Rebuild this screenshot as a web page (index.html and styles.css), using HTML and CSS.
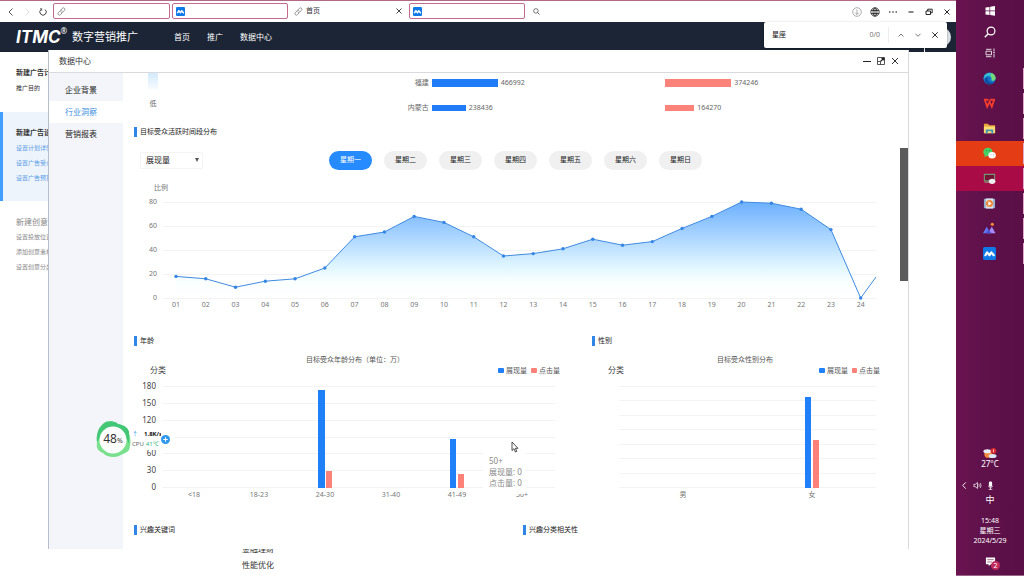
FILE: index.html
```html
<!DOCTYPE html>
<html lang="zh-CN">
<head>
<meta charset="utf-8">
<title>数字营销推广</title>
<link rel="stylesheet" href="styles.css">
</head>
<body>
<svg class="defs" aria-hidden="true">
  <symbol id="i-link" viewBox="0 0 8 8"><g fill="none" stroke="#888" stroke-width=".8" stroke-linecap="round"><path d="M3.4 2.6 4.8 1.2a1.2 1.2 0 0 1 1.9 1.7L5 4.6a1.1 1.1 0 0 1-1.6 0"/><path d="M4.4 5.4 3.1 6.8a1.2 1.2 0 0 1-1.9-1.7l1.7-1.7a1.1 1.1 0 0 1 1.6 0"/></g></symbol>
  <symbol id="i-close" viewBox="0 0 8 8"><path d="M1.5 1.5l5 5m0-5l-5 5" fill="none" stroke="currentColor" stroke-width=".9"/></symbol>
  <symbol id="i-site" viewBox="0 0 12 12"><rect width="12" height="12" rx="1.5" fill="#0f79e8"/><path d="M2.2 7.600l1.600-2.600 2.200 2.600 1.700-2.600 2.200 2.600" fill="none" stroke="#fff" stroke-width="2" stroke-linejoin="round" stroke-linecap="round"/></symbol>
  <symbol id="i-search" viewBox="0 0 12 12"><circle cx="7" cy="5" r="3.9" fill="none" stroke="currentColor" stroke-width="1.2"/><path d="M4.2 7.8L.8 11.2" stroke="currentColor" stroke-width="1.4"/></symbol>
</svg>

<div class="desktop">
  <div class="browser">
    <div class="toolbar">
      <button class="tool" aria-label="后退"><svg viewBox="0 0 10 10"><path d="M6.5 1.5L3 5l3.5 3.5" fill="none" stroke="#555"/></svg></button>
      <button class="tool" aria-label="前进"><svg viewBox="0 0 10 10"><path d="M3.5 1.5L7 5 3.5 8.5" fill="none" stroke="#ddd"/></svg></button>
      <button class="tool" aria-label="刷新"><svg viewBox="0 0 10 10"><path d="M3 2.5A3.2 3.2 0 1 0 7.2 2.6M2.2 1.8h1.5v1.7" fill="none" stroke="#333" stroke-width=".9"/></svg></button>
      <div class="tabs">
        <button class="tab boxed" aria-label="标签页 1"><svg class="fav"><use href="#i-link"/></svg></button>
        <button class="tab boxed" aria-label="标签页 2"><svg class="fav"><use href="#i-site"/></svg></button>
        <button class="tab"><svg class="fav"><use href="#i-link"/></svg><span>首页</span><svg class="tab-close"><use href="#i-close"/></svg></button>
        <button class="tab boxed" aria-label="标签页 4"><svg class="fav"><use href="#i-site"/></svg></button>
      </div>
      <button class="tool" aria-label="搜索"><svg class="flip small" viewBox="0 0 12 12"><use href="#i-search"/></svg></button>
      <div class="window-tools">
        <button class="tool" aria-label="下载"><svg viewBox="0 0 10 10" fill="none" stroke="#888" stroke-width=".7"><circle cx="5" cy="5" r="4.3"/><path d="M5 2.5v5M3.2 5.7L5 7.5l1.800-1.800"/></svg></button>
        <button class="tool" aria-label="语言"><svg viewBox="0 0 10 10" fill="none" stroke="#222" stroke-width=".8"><circle cx="5" cy="5" r="4.2"/><ellipse cx="5" cy="5" rx="2" ry="4.2"/><path d="M1 3.5h8M1 6.5h8M5 1v8"/></svg></button>
        <button class="tool" aria-label="更多"><svg viewBox="0 0 10 10" fill="#222"><circle cx="1.8" cy="5" r=".8"/><circle cx="5" cy="5" r=".8"/><circle cx="8.2" cy="5" r=".8"/></svg></button>
        <button class="tool" aria-label="最小化"><svg viewBox="0 0 10 10"><path d="M2.5 5h5" stroke="#111"/></svg></button>
        <button class="tool" aria-label="还原"><svg viewBox="0 0 10 10" fill="none" stroke="#111" stroke-width=".9"><path d="M2 4h4.500v3.500H2zM3.700 4V2.200h4.500v3.600H6.500"/></svg></button>
        <button class="tool" aria-label="关闭窗口"><svg viewBox="0 0 10 10"><path d="M2.5 2.5l5 5m0-5l-5 5" stroke="#111" stroke-width=".9"/></svg></button>
      </div>
    </div>

    <header class="site-header">
      <div class="logo"><span class="logo-mark">ITMC</span><sup>®</sup></div>
      <span class="logo-name">数字营销推广</span>
      <nav class="site-nav"><a href="#">首页</a><a href="#">推广</a><a href="#">数据中心</a></nav>
      <span class="header-line"></span>
      <span class="avatar"></span>
    </header>

    <div class="page">
      <aside class="steps">
        <section class="step"><h3>新建广告计划</h3><a href="#">推广目的</a></section>
        <section class="step current"><h3>新建广告设置</h3><a href="#">设置计划详情</a><a href="#">设置广告受众</a><a href="#">设置广告预算</a></section>
        <section class="step pending"><h3>新建创意</h3><a href="#">设置投放位置</a><a href="#">添加创意素材</a><a href="#">设置创意分类</a></section>
      </aside>
      <div class="keywords"><span>金融理财</span><span>性能优化</span></div>
    </div>

    <form class="find">
      <input type="text" aria-label="查找" value="星座">
      <span class="find-count">0/0</span>
      <span class="find-actions">
        <button type="button" class="tool" aria-label="上一个"><svg viewBox="0 0 10 10"><path d="M2.5 6.5L5 4l2.500 2.500" fill="none" stroke="#555" stroke-width=".8"/></svg></button>
        <button type="button" class="tool" aria-label="下一个"><svg viewBox="0 0 10 10"><path d="M2.5 3.8L5 6.300l2.500-2.500" fill="none" stroke="#555" stroke-width=".8"/></svg></button>
        <button type="button" class="tool" aria-label="关闭查找"><svg viewBox="0 0 10 10"><path d="M2.3 2.3l5.400 5.400m0-5.400L2.300 7.700" stroke="#333"/></svg></button>
      </span>
    </form>

    <div class="dialog" role="dialog" aria-labelledby="dialog-title">
      <div class="dialog-head">
        <h2 id="dialog-title">数据中心</h2>
        <button class="tool" aria-label="最小化面板"><svg viewBox="0 0 10 10"><path d="M1 5.5h8" stroke="#222"/></svg></button>
        <button class="tool" aria-label="最大化面板"><svg viewBox="0 0 10 10" fill="none" stroke="#444" stroke-width=".9"><path d="M1.500 1.500h7v7h-7zM1.500 5.500h3v3"/><path d="M4.500 5.500l3.500-3.500M5.500 2.300h2.300V4.500" stroke="#222" stroke-width="1.200"/></svg></button>
        <button class="tool" aria-label="关闭面板"><svg viewBox="0 0 10 10"><path d="M2 2l6 6m0-6L2 8" stroke="#333"/></svg></button>
      </div>
      <div class="dialog-body">
        <nav class="side-nav">
          <a href="#">企业背景</a>
          <a href="#" class="active">行业洞察</a>
          <a href="#">营销报表</a>
        </nav>
        <main class="report">
          <div class="regions">
            <div class="heat"><span class="heat-bar"></span><span>低</span></div>
            <div class="hbars">
              <div class="hbar"><span class="hbar-name">福建</span><span class="bar tall" style="width:66px"></span><span>466992</span></div>
              <div class="hbar"><span class="hbar-name">内蒙古</span><span class="bar" style="width:34px"></span><span>238436</span></div>
            </div>
            <div class="hbars red">
              <div class="hbar"><span class="bar tall" style="width:66px"></span><span>374246</span></div>
              <div class="hbar"><span class="bar" style="width:29px"></span><span>164270</span></div>
            </div>
          </div>

          <h3 class="title">目标受众活跃时间段分布</h3>
          <div class="filters">
            <label class="picker"><select aria-label="指标"><option>展现量</option><option>点击量</option></select><span class="caret"></span></label>
            <div class="days">
              <button class="on">星期一</button><button>星期二</button><button>星期三</button><button>星期四</button><button>星期五</button><button>星期六</button><button>星期日</button>
            </div>
          </div>

          <svg class="chart hours" viewBox="134 180 755 132" role="img" aria-label="活跃时间段">
            <defs><linearGradient id="fade" gradientUnits="userSpaceOnUse" x1="0" y1="202" x2="0" y2="298"><stop offset="0" stop-color="#6cb0fe"/><stop offset=".4" stop-color="#b2d9ff"/><stop offset=".65" stop-color="#dcf4ff"/><stop offset=".83" stop-color="#faffff"/><stop offset="1" stop-color="#fff"/></linearGradient></defs>
            <g class="grid" id="hour-grid"></g>
            <g id="hour-plot"></g>
            <text class="end" x="168" y="190">比例</text>
          </svg>

          <div class="pair audience">
            <section>
              <h3 class="title">年龄</h3>
              <svg class="chart" viewBox="134 350 458 150" role="img" aria-label="年龄分布">
                <g class="grid" id="age-grid"></g>
                <text class="mid dark" x="355" y="362">目标受众年龄分布（单位：万）</text>
                <text class="mid big" x="158" y="373">分类</text>
                <rect class="blue" x="498" y="368" width="6" height="5" rx="1"/><text class="dark" x="506" y="373">展现量</text>
                <rect class="coral" x="531" y="368" width="6" height="5" rx="1"/><text class="dark" x="539" y="373">点击量</text>
                <rect class="blue" x="318" y="390" width="7" height="98"/><rect class="coral" x="326" y="471" width="6" height="17"/>
                <rect class="blue" x="450" y="439" width="6" height="49"/><rect class="coral" x="458" y="474" width="6" height="14"/>
                <g class="mid-group"><text x="194" y="497">&lt;18</text><text x="259" y="497">18-23</text><text x="325" y="497">24-30</text><text x="391" y="497">31-40</text><text x="457" y="497">41-49</text><text x="522" y="497">50+</text></g>
              </svg>
              <div class="tooltip"><span>50+</span><span>展现量: 0</span><span>点击量: 0</span></div>
            </section>
            <section>
              <h3 class="title">性别</h3>
              <svg class="chart" viewBox="592 350 297 150" role="img" aria-label="性别分布">
                <g class="grid" id="sex-grid"></g>
                <text class="mid dark" x="745" y="362">目标受众性别分布</text>
                <text class="mid big" x="616" y="373">分类</text>
                <rect class="blue" x="819" y="368" width="6" height="5" rx="1"/><text class="dark" x="827" y="373">展现量</text>
                <rect class="coral" x="852" y="368" width="5" height="5" rx="1"/><text class="dark" x="859" y="373">点击量</text>
                <rect class="blue" x="805" y="397" width="6" height="91"/><rect class="coral" x="813" y="440" width="6" height="48"/>
                <g class="mid-group"><text x="683" y="497">男</text><text x="812" y="497">女</text></g>
              </svg>
            </section>
          </div>

          <div class="pair interests">
            <h3 class="title">兴趣关键词</h3>
            <h3 class="title">兴趣分类相关性</h3>
          </div>
        </main>
        <div class="scroll"><span></span></div>
      </div>
    </div>

    <div class="monitor">
      <div class="gauge">
        <svg viewBox="0 0 36 38"><path d="M8 4C12 0 20 1 23 4c6 1 11 4 11 9 2 5 2 12 0 17-2 3-7 4-10 6-5 2-13 1-16-3-5-2-7-5-6-10-1-7 1-14 6-19z" fill="#7be08d"/><path d="M8 4C12 0 20 1 23 4c6 1 11 4 11 9v11C29 8 12 4 2 22 1 15 3 8 8 4z" fill="#43c777"/><circle cx="18" cy="20" r="13.500" fill="#fff"/></svg>
        <span><b>48</b>%</span>
      </div>
      <div class="stats"><span><i>↑</i><strong>1.8K/s</strong></span><span>CPU <em>41℃</em></span></div>
      <button class="plus" aria-label="加速"><svg viewBox="0 0 10 10"><circle cx="5" cy="5" r="5" fill="#2d97ee"/><path d="M5 2.500v5M2.500 5h5" stroke="#fff" stroke-width="1.200"/></svg></button>
    </div>
    <svg class="pointer" viewBox="0 0 8 12"><path d="M1 1v8.500l2-1.800L4.500 11l1.300-.6L4.400 7.300H7z" fill="#fff" stroke="#222" stroke-width=".8"/></svg>
  </div>

  <aside class="taskbar">
    <div class="launch">
      <button aria-label="开始"><svg viewBox="0 0 12 12" fill="#fff"><path d="M1.500 2.500l4-.6v3.700h-4zM6.200 1.800l4.800-.7v4.500H6.200zM1.500 6.300h4V10l-4-.6zM6.200 6.300H11v4.500l-4.800-.7z"/></svg></button>
      <button aria-label="搜索"><svg class="white" viewBox="0 0 12 12"><use href="#i-search"/></svg></button>
      <button aria-label="任务视图"><svg viewBox="0 0 12 12" fill="none" stroke="#eee" stroke-width=".9"><path d="M2 4.200h5.500v3.600H2zM2 2.300h5.500M2 9.700h5.500M10 1.500v3M10 7v3.500M9 5.700h2"/></svg></button>
    </div>
    <div class="apps">
      <button class="run" aria-label="Edge"><svg viewBox="0 0 14 14"><circle cx="7" cy="7" r="6.500" fill="#1473c8"/><path d="M1 5C3-.8 12-.8 13.500 6c.3 3-2 4-4.500 3 1-3-1.500-5-4-4.500C3 4.500 1.500 6 .6 8z" fill="#37bdd0"/><path d="M9 1c3 1 4.500 3 4.500 5.500 0 2.500-2.500 3.500-4.500 2.500 1.200-2 0-4-1-4.500z" fill="#75d875"/><path d="M5.500 6C4 9 7 12.500 11.500 11.500 9 14.500 3 14 2 9c0-2 1.800-3.500 3.500-3z" fill="#0e4d9e"/></svg></button>
      <button class="run" aria-label="WPS"><svg viewBox="0 0 14 14"><path d="M1 3h5M2 3l2.500 7.500L7 5l2.500 5.500L12 3M7.500 3H13" fill="none" stroke="#f03b2d" stroke-width="2"/></svg></button>
      <button class="run" aria-label="文件资源管理器"><svg viewBox="0 0 14 14"><path d="M1 2h4.500l1 1.500H13V12H1z" fill="#e8a93c"/><path d="M1 5h12v7H1z" fill="#ffdc73"/><path d="M3 8h8v4.500H9V10H5v2.500H3z" fill="#3d97b8"/></svg></button>
      <button class="run orange" aria-label="微信"><svg viewBox="0 0 14 14"><ellipse cx="5.300" cy="5.300" rx="5" ry="4.500" fill="#45d164"/><path d="M2 8l-.5 3 3-1.500z" fill="#45d164"/><ellipse cx="9.800" cy="9" rx="4" ry="3.500" fill="#fff"/><path d="M3.500 4h.8m2 0h.8" stroke="#166" stroke-width="1"/><path d="M8.300 8.500h.7m2 0h.7" stroke="#777" stroke-width=".8"/></svg></button>
      <button class="run crimson" aria-label="投屏"><svg viewBox="0 0 14 14"><path d="M1.500 2.500h11v7h-11z" fill="#751536" stroke="#729574" stroke-width="1.200"/><path d="M1.500 11h6" stroke="#8aa789"/><ellipse cx="9.800" cy="10" rx="3.500" ry="2.800" fill="#eee"/></svg></button>
      <button class="run" aria-label="播放器"><svg viewBox="0 0 14 14"><path d="M1 2h12v10H1z" fill="#91abc9"/><path d="M3 1.500h8v11H3z" fill="#d7e4ef"/><circle cx="7" cy="7" r="3.800" fill="#ef873c"/><path d="M5.800 4.700L9.300 7 5.800 9.300z" fill="#fff"/></svg></button>
      <button class="run" aria-label="图库"><svg viewBox="0 0 14 14"><path d="M0 12l4-7 4 7z" fill="#6277f2"/><path d="M5 12l4.500-7 4 7z" fill="#a78aff"/><path d="M3 12l3-4 3 4z" fill="#4750d3"/><circle cx="10" cy="2.500" r="1.700" fill="#f58b3f"/></svg></button>
      <button class="run" aria-label="营销客户端"><svg viewBox="0 0 12 12"><use href="#i-site"/></svg></button>
    </div>
    <div class="tray">
      <svg class="weather" viewBox="0 0 16 12"><circle cx="6" cy="7" r="4.500" fill="#f3893b"/><ellipse cx="5" cy="4" rx="4.500" ry="2.300" fill="#e7effb"/><ellipse cx="11" cy="9.500" rx="4.500" ry="2.300" fill="#dce9fa"/><circle cx="12" cy="3.500" r="3.300" fill="#d6292b"/><path d="M12 1.800v3.400" stroke="#fff" stroke-width=".8"/></svg>
      <span class="temp">27°C</span>
      <div class="tray-icons">
        <svg viewBox="0 0 10 10"><path d="M6.500 1.500L3 5l3.500 3.500" fill="none" stroke="#fff"/></svg>
        <svg viewBox="0 0 10 10" fill="none" stroke="#fff" stroke-width=".8"><path d="M1 3.700h1.500L5 1.700v6.600L2.500 6.300H1zM6.500 3.500q1 1.500 0 3M8 2.300q2 2.700 0 5.400"/></svg>
        <svg viewBox="0 0 10 10"><rect x="3.200" y=".5" width="3.600" height="6" rx="1.500" fill="#fff"/><path d="M2.500 5.500q2.500 4 5 0M5 7v2.500M3 9.300h4" fill="none" stroke="#fff" stroke-width=".8"/></svg>
      </div>
      <span class="ime">中</span>
      <div class="clock"><span>15:48</span><span>星期三</span><span>2024/5/29</span></div>
      <button class="notes" aria-label="通知"><svg viewBox="0 0 12 12"><path d="M1 1.500h10v7.500H6.500L4 11V9H1z" fill="#fff"/><path d="M2.500 4h7M2.500 6.500h5" stroke="#8b3c69" stroke-width=".8"/></svg><span>2</span></button>
    </div>
  </aside>
</div>
<script src="charts.js"></script>
</body>
</html>
```

FILE: styles.css
```css
* { box-sizing: border-box; }
body { margin: 0; font: 7px/10px "Noto Sans", "Noto Sans CJK SC", sans-serif; color: #333; background: #fff; }
button { margin: 0; padding: 0; border: 0; background: none; font: inherit; color: inherit; }
a { color: inherit; text-decoration: none; }
h2, h3 { margin: 0; font: inherit; }
svg { display: block; }
.defs { position: absolute; width: 0; height: 0; }

.desktop { display: grid; grid-template-columns: 1fr 68px; height: 100vh; overflow: hidden; }
.browser { position: relative; display: flex; flex-direction: column; min-width: 0; overflow: hidden; }

.toolbar { display: flex; align-items: center; height: 22px; flex: none; border-top: 1px solid #b06a88; padding: 0 1px 0 3px; }
.tool { display: grid; place-items: center; width: 16px; height: 16px; flex: none; }
.tool svg { width: 10px; height: 10px; }
.tool .small { width: 7px; height: 7px; color: #444; }
.flip { transform: scaleX(-1); }
.tabs { display: flex; gap: 2px; flex: 0 1 472px; min-width: 0; margin: 0 3px 1px 2px; }
.tab { display: flex; align-items: center; gap: 3px; flex: 1; min-width: 0; height: 16px; padding: 0 3px; border: 1px solid transparent; border-radius: 2px; }
.tab.boxed { border-color: #c36b8f; }
.fav { width: 9px; height: 9px; }
.tab-close { width: 8px; height: 8px; margin-left: auto; }
.window-tools { display: flex; gap: 2px; margin-left: auto; }

.site-header { display: flex; align-items: center; height: 30px; flex: none; padding: 0 5px 0 16px; background: #1b2535; color: #fff; }
.logo { display: flex; width: 56px; }
.logo-mark { font: italic 700 17px/20px Inter, sans-serif; }
.logo sup { font-size: 8px; line-height: 8px; vertical-align: top; }
.logo-name { font-size: 11px; line-height: 16px; }
.site-nav { display: flex; gap: 17px; flex: 1; margin-left: 36px; font-size: 8px; }
.header-line { width: 1px; align-self: stretch; background: #fff; }
.avatar { width: 20px; height: 20px; margin-left: 6px; border-radius: 50%; background: #dfe5ea; }

.page { display: grid; grid-template-columns: 160px 1fr; flex: 1; min-height: 0; }
.steps { display: flex; flex-direction: column; }
.step { display: flex; flex-direction: column; gap: 5px; padding: 16px 16px 16px 13px; border-left: 3px solid transparent; white-space: nowrap; font-size: 6px; }
.step h3 { font-size: 7px; font-weight: 700; }
.step:first-child { padding-bottom: 19px; }
.step.current { border-color: #409eff; background: #edf4fc; color: #5b9ce6; padding-bottom: 18px; }
.step.current h3 { color: #333; }
.step.pending { color: #888; }
.step.pending h3 { font-size: 8px; font-weight: 400; }
.keywords { display: flex; flex-direction: column; align-self: end; gap: 6px; padding: 0 82px 6px; font-size: 8px; }

.find { position: absolute; top: 22px; right: 9px; display: flex; align-items: center; width: 183px; height: 26px; padding-left: 8px; background: #fff; border-radius: 2px; box-shadow: 0 1px 3px #0005; }
.find input { flex: 1; min-width: 0; padding: 0; border: 0; outline: 0; font: inherit; color: #111; }
.find-count { color: #777; margin-right: 8px; }
.find-actions { display: flex; gap: 1px; border-left: 1px solid #eee; padding: 0 4px; }

.dialog { position: absolute; top: 50px; right: 47px; bottom: 27px; left: 48px; display: flex; flex-direction: column; background: #fff; border: 1px solid #d9dadd; border-width: 0 1px 0 1px; border-left-color: #b7bdc9; }
.dialog-head { display: flex; align-items: center; flex: none; height: 23px; padding: 0 6px 0 10px; border-bottom: 1px solid #d9d9de; }
.dialog-head h2 { flex: 1; font-size: 8px; }
.dialog-head .tool { width: 14px; }
.dialog-body { display: grid; grid-template-columns: 74px 1fr 8px; flex: 1; min-height: 0; }
.side-nav { display: flex; flex-direction: column; padding-top: 6px; background: #f4f5fa; font-size: 8px; color: #222; }
.side-nav a { padding: 6px 16px; white-space: nowrap; }
.side-nav .active { background: #fff; color: #3f8fe0; }
.report { min-width: 0; overflow: hidden; padding: 0 11px; }
.scroll { padding-top: 75px; }
.scroll span { display: block; height: 133px; background: #5b5b5b; }

.regions { display: grid; grid-template-columns: 259fr 273fr 224fr; height: 53px; color: #666; }
.heat { display: flex; flex-direction: column; align-items: center; width: 10px; margin-left: 14px; gap: 10px; }
.heat-bar { width: 10px; height: 16px; background: linear-gradient(#d3eafc, #f6fbff); }
.hbars { display: flex; flex-direction: column; gap: 15px; padding-top: 5px; }
.hbar { display: flex; align-items: center; gap: 3px; height: 10px; }
.hbar-name { width: 36px; text-align: right; }
.bar { height: 6px; background: #1f7bf6; }
.bar.tall { height: 8px; }
.red .bar { background: #fb8379; }

.title { display: flex; align-items: center; gap: 3px; height: 12px; color: #222; font-size: 7px; }
.title::before { content: ""; width: 3px; height: 10px; background: #2f86e6; }
.filters { display: flex; align-items: center; height: 20px; margin: 12px 0 10px; padding-left: 6px; }
.picker { position: relative; width: 63px; }
.picker select { appearance: none; width: 100%; height: 17px; padding: 0 5px; border: 1px solid #f4f4f4; border-radius: 2px; background: #fff; font: inherit; font-size: 8px; color: #222; }
.caret { position: absolute; top: 6px; right: 4px; border: 2px solid transparent; border-top: 4px solid #555; }
.days { display: flex; gap: 12px; margin-left: 126px; }
.days button { width: 43px; height: 19px; border-radius: 10px; background: #f0f0f1; color: #222; }
.days .on { background: #268bff; color: #fff; }

.chart { width: 100%; height: auto; font-size: 7px; }
.chart text { fill: #777; }
.chart .end { text-anchor: end; }
.chart .mid, .mid-group text { text-anchor: middle; }
.chart .dark { fill: #555; }
.chart .big { fill: #444; font-size: 8px; }
.grid line { stroke: #f3f3f4; }
.blue { fill: #2080f7; }
.coral { fill: #fc8279; }
.line { fill: none; stroke: #3f8be0; }
.dot { fill: #3585e3; }

.pair { display: grid; }
.audience { grid-template-columns: 458fr 297fr; margin-top: 23px; }
.audience section { position: relative; }
.audience .chart { margin-top: 3px; }
.interests { grid-template-columns: 389fr 366fr; margin-top: 24px; }
.tooltip { position: absolute; left: 349px; top: 115px; display: flex; flex-direction: column; gap: 1px; width: 43px; padding: 6px; background: #fffffff2; border-radius: 2px; font-size: 8px; color: #888; white-space: nowrap; }

.monitor { position: absolute; top: 420px; left: 95px; display: flex; align-items: center; width: 80px; height: 38px; }
.gauge { position: relative; z-index: 1; width: 36px; }
.gauge > span { position: absolute; inset: 0; display: flex; align-items: baseline; justify-content: center; line-height: 38px; font-size: 7px; }
.gauge b { font-size: 12px; font-weight: 400; }
.stats { display: flex; flex-direction: column; flex: 1; height: 22px; min-width: 0; margin-left: -8px; padding: 1px 0 0 9px; background: #fff; font-size: 6px; white-space: nowrap; color: #666; }
.stats span { display: flex; gap: 2px; }
.stats i, .stats em { font-style: normal; }
.stats i { color: #2d97ee; }
.stats strong { margin-left: 4px; font-weight: 700; color: #111; }
.stats em { color: #28b877; }
.plus { display: flex; align-items: center; width: 14px; height: 22px; background: #fff; border-radius: 0 11px 11px 0; }
.plus svg { width: 9px; height: 9px; }
.pointer { position: absolute; left: 511px; top: 441px; width: 8px; height: 12px; }

.taskbar { display: flex; flex-direction: column; background: linear-gradient(90deg, #6a1450, #5f114a 40%, #5a0f46); color: #fff; border-bottom: 1px solid #9b6488; }
.taskbar button { display: grid; place-items: center; width: 100%; }
.launch button { height: 21px; }
.launch svg { width: 12px; height: 12px; }
.launch .white { color: #fff; }
.apps { margin-top: 3px; }
.taskbar .run { height: 25px; border-right: 1px solid #e3a7cb; border-image: linear-gradient(transparent 10%, #e3a7cb 10% 90%, transparent 90%) 1; }
.run svg { width: 13px; height: 13px; }
.taskbar .orange { background: #e43d16; }
.taskbar .crimson { background: #a90b47; }
.tray { display: flex; flex-direction: column; align-items: center; margin-top: auto; }
.weather { width: 14px; height: 12px; }
.temp { font-size: 8px; }
.tray-icons { display: flex; gap: 4px; margin: 12px 0 5px; align-self: flex-start; padding-left: 4px; }
.tray-icons svg { width: 9px; height: 9px; }
.ime { font-size: 9px; }
.clock { display: flex; flex-direction: column; align-items: center; margin-top: 11px; }
.taskbar .notes { position: relative; width: 14px; height: 12px; margin: 9px 0 8px; }
.notes svg { width: 11px; height: 11px; }
.notes span { position: absolute; right: -3px; bottom: -3px; width: 9px; height: 9px; border-radius: 50%; background: #c22a5e; line-height: 9px; }
```

FILE: charts.js
```js
const NS = "http://www.w3.org/2000/svg";
function add(parent, name, attrs, text) {
  const node = document.createElementNS(NS, name);
  for (const key in attrs) node.setAttribute(key, attrs[key]);
  if (text !== undefined) node.textContent = text;
  parent.appendChild(node);
}
function grid(id, x1, x2, top, bottom, steps) {
  const g = document.getElementById(id);
  for (let i = 0; i <= steps; i++) {
    const y = Math.round(bottom - (bottom - top) * i / steps) + 0.5;
    add(g, "line", { x1, x2, y1: y, y2: y });
  }
}

const hours = [18, 16, 9, 14, 16, 25, 51, 55, 68, 63, 51, 35, 37, 41, 49, 44, 47, 58, 68, 80, 79, 74, 57, 0];
const plot = document.getElementById("hour-plot");
const pts = hours.map((v, i) => [176 + i * 684.7 / 23, 298 - v * 1.2]);
const path = pts.concat([[876, 277]]).map(p => p.join(",")).join(" ");
grid("hour-grid", 162, 876, 202, 298, 4);
add(plot, "polygon", { points: "176,298 " + pts.map(p => p.join(",")).join(" "), fill: "url(#fade)" });
add(plot, "polyline", { points: path, class: "line" });
pts.forEach(([x, y], i) => {
  add(plot, "circle", { cx: x, cy: y, r: 1.7, class: "dot" });
  add(plot, "text", { x, y: 307, class: "mid" }, String(i + 1).padStart(2, "0"));
});
for (let v = 0; v <= 80; v += 20) add(plot, "text", { x: 157, y: 300 - v * 1.2, class: "end" }, v);

grid("age-grid", 162, 555, 386, 487, 6);
const age = document.getElementById("age-grid");
[0, 30, 60, 120, 150, 180].forEach(v => add(age, "text", { x: 156, y: 490 - v * 101 / 180, class: "end big" }, v));
grid("sex-grid", 619, 876, 386, 487, 7);
```
